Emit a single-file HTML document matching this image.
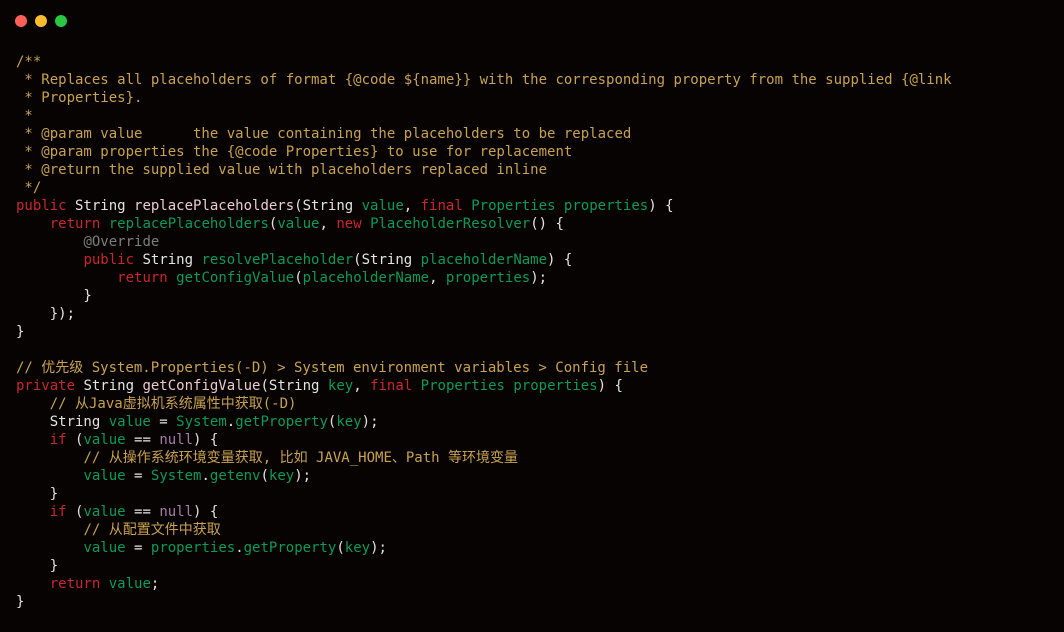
<!DOCTYPE html>
<html><head><meta charset="utf-8"><style>
html,body{margin:0;padding:0;background:#070303;width:1064px;height:632px;overflow:hidden}
.dots{position:absolute;top:15px;left:15px}
.dots span{position:absolute;width:12px;height:12px;border-radius:50%;top:0}
pre{position:absolute;left:16px;top:53px;margin:0;font-family:"DejaVu Sans Mono","Liberation Mono","Noto Sans CJK SC",monospace;font-size:14px;line-height:18px;color:#e4e4e4}
.c{color:#c9a24f}.k{color:#c9262b}.g{color:#0b9a58}.m{color:#ecc9d6}.n{color:#a57ca8}.a{color:#7d7d7d}
</style></head><body>
<div class="dots"><span style="left:0;background:#fe5f57"></span><span style="left:20px;background:#febc2e"></span><span style="left:40px;background:#28c840"></span></div>
<pre><span class="c">/**
 * Replaces all placeholders of format {@code ${name}} with the corresponding property from the supplied {@link
 * Properties}.
 *
 * @param value      the value containing the placeholders to be replaced
 * @param properties the {@code Properties} to use for replacement
 * @return the supplied value with placeholders replaced inline
 */</span>
<span class="k">public</span> String <span class="m">replacePlaceholders</span>(String <span class="g">value</span>, <span class="k">final</span> <span class="g">Properties properties</span>) {
    <span class="k">return</span> <span class="g">replacePlaceholders</span>(<span class="g">value</span>, <span class="k">new</span> <span class="g">PlaceholderResolver</span>() {
        <span class="a">@Override</span>
        <span class="k">public</span> String <span class="g">resolvePlaceholder</span>(String <span class="g">placeholderName</span>) {
            <span class="k">return</span> <span class="g">getConfigValue</span>(<span class="g">placeholderName</span>, <span class="g">properties</span>);
        }
    });
}

<span class="c">// 优先级 System.Properties(-D) &gt; System environment variables &gt; Config file</span>
<span class="k">private</span> String <span class="m">getConfigValue</span>(String <span class="g">key</span>, <span class="k">final</span> <span class="g">Properties properties</span>) {
    <span class="c">// 从Java虚拟机系统属性中获取(-D)</span>
    String <span class="g">value</span> = <span class="g">System</span>.<span class="g">getProperty</span>(<span class="g">key</span>);
    <span class="k">if</span> (<span class="g">value</span> == <span class="n">null</span>) {
        <span class="c">// 从操作系统环境变量获取, 比如 JAVA_HOME、Path 等环境变量</span>
        <span class="g">value</span> = <span class="g">System</span>.<span class="g">getenv</span>(<span class="g">key</span>);
    }
    <span class="k">if</span> (<span class="g">value</span> == <span class="n">null</span>) {
        <span class="c">// 从配置文件中获取</span>
        <span class="g">value</span> = <span class="g">properties</span>.<span class="g">getProperty</span>(<span class="g">key</span>);
    }
    <span class="k">return</span> <span class="g">value</span>;
}</pre>
</body></html>
